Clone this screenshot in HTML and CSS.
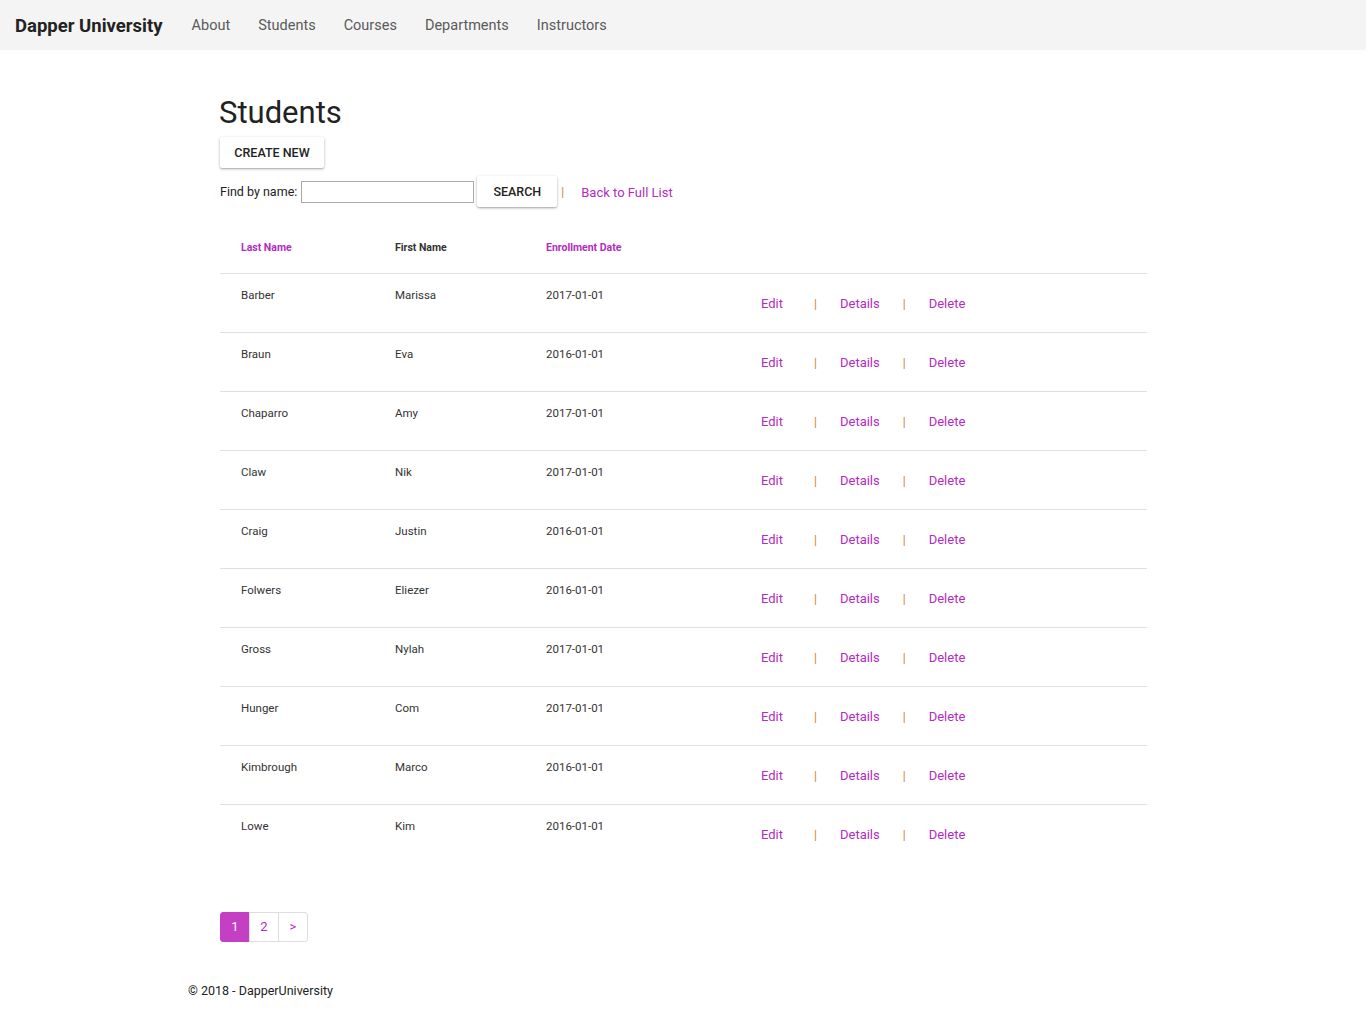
FILE: index.html
```html
<!DOCTYPE html>
<html>
<head>
<meta charset="utf-8">
<link rel="stylesheet" href="styles.css">
</head>
<body>
<nav class="navbar">
  <a class="brand" href="#">Dapper University</a>
  <ul class="nav">
    <li><a href="#">About</a></li>
    <li><a href="#">Students</a></li>
    <li><a href="#">Courses</a></li>
    <li><a href="#">Departments</a></li>
    <li><a href="#">Instructors</a></li>
  </ul>
</nav>
<main class="main">
  <h1 class="title">Students</h1>
  <button class="btn btn-create">CREATE NEW</button>
  <form class="search">
    <label class="search-label">Find by name:</label>
    <input class="search-input" type="text">
    <button class="btn btn-search" type="button">SEARCH</button>
    <span class="sep">|</span>
    <a class="link back" href="#">Back to Full List</a>
  </form>
  <table class="table">
    <thead>
      <tr>
        <th class="c1"><a class="link" href="#">Last Name</a></th>
        <th class="c2">First Name</th>
        <th class="c3"><a class="link" href="#">Enrollment Date</a></th>
        <th class="c4"></th>
      </tr>
    </thead>
    <tbody>
      <tr><td>Barber</td><td>Marissa</td><td>2017-01-01</td><td class="actions"><a class="link a-edit" href="#">Edit</a><span class="sep">|</span><a class="link" href="#">Details</a><span class="sep">|</span><a class="link" href="#">Delete</a></td></tr>
      <tr><td>Braun</td><td>Eva</td><td>2016-01-01</td><td class="actions"><a class="link a-edit" href="#">Edit</a><span class="sep">|</span><a class="link" href="#">Details</a><span class="sep">|</span><a class="link" href="#">Delete</a></td></tr>
      <tr><td>Chaparro</td><td>Amy</td><td>2017-01-01</td><td class="actions"><a class="link a-edit" href="#">Edit</a><span class="sep">|</span><a class="link" href="#">Details</a><span class="sep">|</span><a class="link" href="#">Delete</a></td></tr>
      <tr><td>Claw</td><td>Nik</td><td>2017-01-01</td><td class="actions"><a class="link a-edit" href="#">Edit</a><span class="sep">|</span><a class="link" href="#">Details</a><span class="sep">|</span><a class="link" href="#">Delete</a></td></tr>
      <tr><td>Craig</td><td>Justin</td><td>2016-01-01</td><td class="actions"><a class="link a-edit" href="#">Edit</a><span class="sep">|</span><a class="link" href="#">Details</a><span class="sep">|</span><a class="link" href="#">Delete</a></td></tr>
      <tr><td>Folwers</td><td>Eliezer</td><td>2016-01-01</td><td class="actions"><a class="link a-edit" href="#">Edit</a><span class="sep">|</span><a class="link" href="#">Details</a><span class="sep">|</span><a class="link" href="#">Delete</a></td></tr>
      <tr><td>Gross</td><td>Nylah</td><td>2017-01-01</td><td class="actions"><a class="link a-edit" href="#">Edit</a><span class="sep">|</span><a class="link" href="#">Details</a><span class="sep">|</span><a class="link" href="#">Delete</a></td></tr>
      <tr><td>Hunger</td><td>Com</td><td>2017-01-01</td><td class="actions"><a class="link a-edit" href="#">Edit</a><span class="sep">|</span><a class="link" href="#">Details</a><span class="sep">|</span><a class="link" href="#">Delete</a></td></tr>
      <tr><td>Kimbrough</td><td>Marco</td><td>2016-01-01</td><td class="actions"><a class="link a-edit" href="#">Edit</a><span class="sep">|</span><a class="link" href="#">Details</a><span class="sep">|</span><a class="link" href="#">Delete</a></td></tr>
      <tr><td>Lowe</td><td>Kim</td><td>2016-01-01</td><td class="actions"><a class="link a-edit" href="#">Edit</a><span class="sep">|</span><a class="link" href="#">Details</a><span class="sep">|</span><a class="link" href="#">Delete</a></td></tr>
    </tbody>
  </table>
  <ul class="pager">
    <li class="active"><a href="#">1</a></li>
    <li><a href="#">2</a></li>
    <li><a href="#">&gt;</a></li>
  </ul>
</main>
<footer class="footer">© 2018 - DapperUniversity</footer>
</body>
</html>
```

FILE: styles.css
```css
* { box-sizing: border-box; }
html, body { margin: 0; padding: 0; }
body {
  font-family: Roboto, "Liberation Sans", sans-serif;
  color: #333;
  background: #fff;
}
a { text-decoration: none; }

.navbar {
  height: 50px;
  background: #f4f4f4;
  display: flex;
  align-items: center;
  padding-left: 15px;
}
.brand {
  font-size: 18.5px;
  font-weight: 700;
  color: #222;
  margin-right: 15px;
  margin-top: 1px;
}
.nav {
  list-style: none;
  margin: 0;
  padding: 0;
  display: flex;
}
.nav a {
  display: block;
  padding: 0 14px;
  font-size: 14.5px;
  color: #5a5a5a;
  line-height: 50px;
  padding-top: 1px;
}

.main {
  width: 927px;
  margin-left: 220px;
  padding-top: 44px;
}
.title {
  font-size: 31px;
  font-weight: 400;
  color: #222;
  margin: 0 0 5px -1px;
  line-height: 38px;
}
.btn {
  font-family: Roboto, "Liberation Sans", sans-serif;
  background: #fff;
  border: none;
  border-radius: 2px;
  box-shadow: 0 1px 3px rgba(0,0,0,0.3), 0 1px 1px rgba(0,0,0,0.1);
  font-size: 12.5px;
  font-weight: 500;
  color: #222;
  cursor: pointer;
  display: block;
}
.btn-create {
  width: 104px;
  height: 31px;
  padding: 0;
}
.search {
  display: flex;
  align-items: center;
  margin-top: 8px;
  height: 31px;
  font-size: 12.5px;
}
.search-label { color: #222; margin-right: 4px; }
.search-input {
  width: 173px;
  height: 22px;
  border: 1px solid #a9a9a9;
  margin: 0 3px 0 0;
  padding: 1px 2px;
}
.btn-search {
  width: 80px;
  height: 31px;
  padding: 0;
}
.sep {
  color: #db7a2e;
  font-size: 12px;
}
.search .sep { margin-left: 4px; }
.link { color: #b12cbf; }
.back { margin-left: 17px; font-size: 13px; margin-top: 1px; }

.table {
  margin-top: 14px;
  width: 927px;
  border-collapse: collapse;
  table-layout: fixed;
}
.c1 { width: 154px; }
.c2 { width: 151px; }
.c3 { width: 215px; }
.table th {
  text-align: left;
  font-size: 10.5px;
  font-weight: 700;
  color: #333;
  padding: 1px 0 0 21px;
  height: 52px;
  border-bottom: 1px solid #e0e0e0;
  vertical-align: middle;
}
.table td {
  font-size: 11.5px;
  padding: 14px 0 0 21px;
  height: 59px;
  vertical-align: top;
  border-bottom: 1px solid #e0e0e0;
  color: #333;
}
.table tbody tr:last-child td { border-bottom: none; }
.table td.actions {
  font-size: 13px;
  padding-top: 22px;
}
.actions .sep { margin: 0 23px; }
.a-edit { margin-right: 8px; }

.pager {
  list-style: none;
  margin: 49px 0 0;
  padding: 0;
  display: flex;
}
.pager li a {
  display: block;
  width: 30px;
  height: 30px;
  line-height: 28px;
  text-align: center;
  font-size: 13px;
  color: #b12cbf;
  border: 1px solid #ddd;
  margin-left: -1px;
}
.pager li:first-child a { margin-left: 0; border-radius: 3px 0 0 3px; }
.pager li:last-child a { border-radius: 0 3px 3px 0; }
.pager li.active a {
  background: #c43fc4;
  border-color: #c43fc4;
  color: #fff;
}

.footer {
  margin: 41px 0 0 188px;
  font-size: 12.5px;
  color: #222;
  padding-bottom: 20px;
}
```
